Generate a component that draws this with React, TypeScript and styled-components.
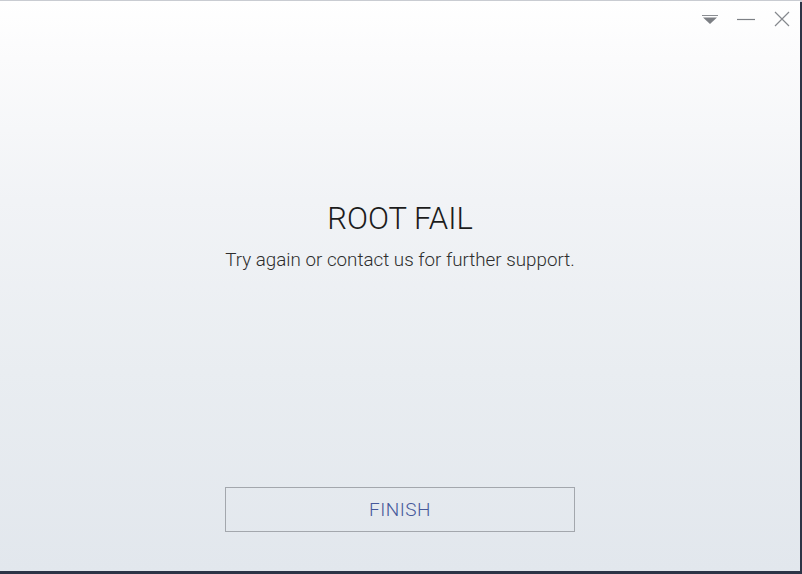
import React from "react";
import styled, { createGlobalStyle } from "styled-components";

const Global = createGlobalStyle`
  html, body { margin: 0; padding: 0; }
  body {
    width: 802px;
    height: 574px;
    overflow: hidden;
    background: #3a4358;
    font-family: Roboto, "Liberation Sans", sans-serif;
  }
`;

const Desktop = styled.div`
  width: 802px;
  height: 574px;
  box-sizing: border-box;
  padding: 1px 2px 3px 0;
  background: linear-gradient(180deg, #c9ccd2 0px, #c9ccd2 2px, #2c3446 2px);
`;

const Window = styled.div`
  width: 800px;
  height: 570px;
  display: flex;
  flex-direction: column;
  background: linear-gradient(180deg, #ffffff 0%, #fbfbfc 10%, #f1f3f6 35%, #e9edf1 65%, #e2e7ed 100%);
`;

const TitleBar = styled.div`
  height: 36px;
  display: flex;
  justify-content: flex-end;
  align-items: center;
  gap: 12px;
  padding: 0 6px 0 0;
`;

const Ctrl = styled.button`
  width: 24px;
  height: 24px;
  border: 0;
  padding: 0;
  background: transparent;
  display: flex;
  align-items: center;
  justify-content: center;
  cursor: pointer;
`;

const Content = styled.div`
  flex: 1;
  display: flex;
  flex-direction: column;
  align-items: center;
`;

const Heading = styled.h1`
  margin: 164px 0 0;
  font-weight: 300;
  font-size: 31px;
  line-height: 36px;
  color: #1c1c1c;
  letter-spacing: 0;
`;

const Sub = styled.p`
  margin: 11px 0 0;
  font-weight: 300;
  font-size: 18.8px;
  line-height: 24px;
  color: #2d2d2d;
`;

const Finish = styled.button`
  margin-top: 215px;
  width: 350px;
  height: 45px;
  border: 1px solid #a3a7ad;
  background: transparent;
  font-family: Roboto, "Liberation Sans", sans-serif;
  font-weight: 300;
  font-size: 19px;
  color: #46589a;
  letter-spacing: 0.5px;
  cursor: pointer;
`;

export default function App() {
  return (
    <>
      <Global />
      <Desktop>
        <Window>
          <TitleBar>
            <Ctrl aria-label="menu">
              <svg width="18" height="14" viewBox="0 0 18 14">
                <line x1="1" y1="3.5" x2="17" y2="3.5" stroke="#8a8d92" strokeWidth="1" />
                <polygon points="2,5.5 16,5.5 9,12" fill="#7c7f84" />
              </svg>
            </Ctrl>
            <Ctrl aria-label="minimize">
              <svg width="20" height="14" viewBox="0 0 20 14">
                <line x1="1" y1="7.5" x2="19" y2="7.5" stroke="#7d8085" strokeWidth="1.2" />
              </svg>
            </Ctrl>
            <Ctrl aria-label="close">
              <svg width="18" height="18" viewBox="0 0 18 18">
                <path d="M2 2 L16 16 M16 2 L2 16" stroke="#85888d" strokeWidth="1.2" />
              </svg>
            </Ctrl>
          </TitleBar>
          <Content>
            <Heading>ROOT FAIL</Heading>
            <Sub>Try again or contact us for further support.</Sub>
            <Finish>FINISH</Finish>
          </Content>
        </Window>
      </Desktop>
    </>
  );
}
